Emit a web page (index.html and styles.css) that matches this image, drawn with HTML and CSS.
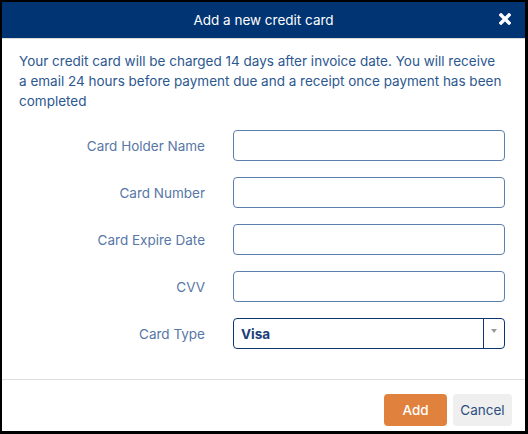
FILE: index.html
```html
<!DOCTYPE html>
<html>
<head>
<meta charset="utf-8">
<link rel="stylesheet" href="styles.css">
</head>
<body>
<div class="dialog">
  <div class="header">
    <span class="title">Add a new credit card</span>
    <span class="close">
      <svg width="12" height="12" viewBox="0 0 12 12"><path d="M2 2 L10 10 M10 2 L2 10" stroke="#fff" stroke-width="3.4" stroke-linecap="square"/></svg>
    </span>
  </div>
  <div class="body">
    <p class="intro">Your credit card will be charged 14 days after invoice date. You will receive a email 24 hours before payment due and a receipt once payment has been completed</p>
    <div class="form">
      <label class="label">Card Holder Name</label><div class="input"></div>
      <label class="label">Card Number</label><div class="input"></div>
      <label class="label">Card Expire Date</label><div class="input"></div>
      <label class="label">CVV</label><div class="input"></div>
      <label class="label">Card Type</label>
      <div class="select"><span class="value">Visa</span><span class="arrow"><svg width="8" height="6" viewBox="0 0 8 6"><path d="M1 1 L7 1 L4 5 Z" fill="#999"/></svg></span></div>
    </div>
  </div>
  <div class="footer">
    <button class="btn add">Add</button>
    <button class="btn cancel">Cancel</button>
  </div>
</div>
</body>
</html>
```
FILE: styles.css
```css
html, body { margin: 0; padding: 0; background: #fff; }
body { font-family: Inter, "Noto Sans", sans-serif; }
.dialog {
  width: 528px;
  height: 434px;
  box-sizing: border-box;
  border-style: solid;
  border-color: #000;
  border-width: 2px 3px 3px 2px;
  display: flex;
  flex-direction: column;
}
.header {
  height: 36px;
  background: #003473;
  border-bottom: 1px solid #dcdcdc;
  display: flex;
  align-items: center;
  justify-content: center;
  position: relative;
}
.title { color: #fff; font-size: 13.5px; }
.close { position: absolute; right: 14px; top: 11px; display: flex; }
.body { padding: 12px 20px 0 17px; flex: 1; }
.intro {
  margin: 0;
  font-size: 13.5px;
  line-height: 20px;
  color: #2c5890;
}
.form {
  margin-top: 19px;
  display: grid;
  grid-template-columns: 186px 1fr;
  column-gap: 28px;
  row-gap: 16px;
  align-items: center;
}
.label {
  text-align: right;
  font-size: 13.5px;
  color: #5877a6;
}
.input {
  height: 31px;
  box-sizing: border-box;
  border: 1px solid #5d7fae;
  border-radius: 4px;
}
.select {
  height: 31px;
  box-sizing: border-box;
  border: 1px solid #0d3572;
  border-radius: 4px;
  display: flex;
  align-items: center;
}
.value { flex: 1; padding-left: 7px; font-weight: 700; font-size: 13.5px; color: #1c3f78; }
.arrow {
  width: 21px;
  height: 100%;
  border-left: 1px solid #0d3572;
  display: flex;
  justify-content: center;
  align-items: flex-start;
  padding-top: 9px;
  box-sizing: border-box;
}
.footer {
  border-top: 1px solid #dedede;
  padding: 14px 13px 5px 0;
  display: flex;
  justify-content: flex-end;
  gap: 6px;
}
.btn {
  height: 32px;
  border: none;
  border-radius: 4px;
  font-family: Inter, "Noto Sans", sans-serif;
  font-size: 13.5px;
  padding: 0;
}
.add { width: 63px; background: #e0813d; color: #fff; font-weight: 500; }
.cancel { width: 59px; background: #efefef; color: #2c4d80; }
```
